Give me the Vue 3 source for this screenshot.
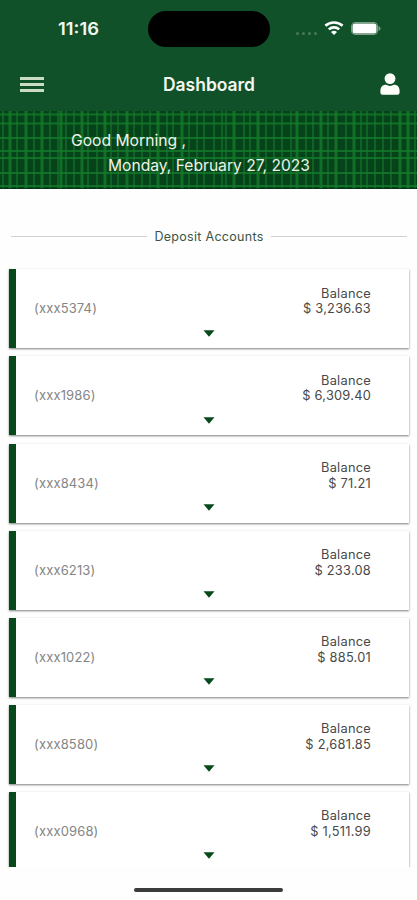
<template>
  <div class="screen">
    <header class="top">
      <div class="status-bar">
        <svg class="time" width="50" height="20" viewBox="0 0 50 20">
          <text x="0" y="16" textLength="41" lengthAdjust="spacingAndGlyphs">11:16</text>
        </svg>
        <div class="island"></div>
        <div class="status-icons">
          <div class="dots"><i v-for="n in 4" :key="n"></i></div>
          <svg class="wifi" width="20" height="15" viewBox="0 0 20 15">
            <path d="M1.4 4.8C6.3 .4 13.7 .4 18.6 4.8" />
            <path d="M4.8 8.4C7.8 5.7 12.2 5.7 15.2 8.4" />
            <path class="wifi-dot" d="M10 14L7 11Q10 8.6 13 11Z" />
          </svg>
          <svg class="battery" width="30" height="13" viewBox="0 0 30 13">
            <rect class="shell" x=".5" y=".5" width="26" height="12" rx="3.5" />
            <rect class="charge" x="1.5" y="1.5" width="24" height="10" rx="2.5" />
            <path class="tip" d="M27.5 4Q29.5 4.8 29.5 6.5T27.5 9Z" />
          </svg>
        </div>
      </div>

      <div class="nav-bar">
        <button class="menu-btn" aria-label="Menu"><i></i><i></i><i></i></button>
        <svg class="title" width="94" height="26" viewBox="0 0 94 26">
          <text x="0" y="19" textLength="92" lengthAdjust="spacingAndGlyphs">Dashboard</text>
        </svg>
        <button class="user-btn" aria-label="Profile">
          <svg width="20" height="22" viewBox="0 0 20 22">
            <circle cx="10" cy="5.6" r="5.4" />
            <path d="M.4 18C.4 13.8 2.6 11.8 6 11.8Q10 14 14 11.8C17.4 11.8 19.6 13.8 19.6 18V19.5Q19.6 21.8 17.4 21.8H2.6Q.4 21.8 .4 19.5Z" />
          </svg>
        </button>
      </div>
    </header>

    <section class="greeting">
      <svg class="plaid" width="417" height="78" viewBox="0 0 417 78">
        <rect width="417" height="78" fill="#07431a" />
        <rect v-for="x in thinColumns" :key="'t' + x" :x="x - 1" y="0" width="2" height="78" class="thread thin" />
        <rect v-for="x in wideColumns" :key="'w' + x" :x="x - 1.5" y="0" width="3" height="78" class="thread" />
        <rect v-for="y in rows" :key="'r' + y" x="0" :y="y - 1" width="417" height="2" class="thread" />
        <rect y="77" width="417" height="1" fill="#03280f" opacity=".6" />
      </svg>
      <svg class="greeting-text" width="417" height="78" viewBox="0 0 417 78">
        <text x="71" y="34.5" textLength="115" lengthAdjust="spacingAndGlyphs">Good Morning ,</text>
        <text x="108" y="60" textLength="202" lengthAdjust="spacingAndGlyphs">Monday, February 27, 2023</text>
      </svg>
    </section>

    <main>
      <div class="divider"><span>Deposit Accounts</span></div>

      <div class="account-list">
        <article v-for="account in accounts" :key="account.number" class="account">
          <span class="number">({{ account.number }})</span>
          <div class="balance">
            <span>Balance</span>
            <span class="amount">$ {{ account.balance }}</span>
          </div>
          <svg class="caret" width="12" height="7" viewBox="0 0 12 7"><path d="M.5 .3H11.5L6 6.7Z" /></svg>
        </article>
      </div>
    </main>

    <div class="home-indicator"></div>
  </div>
</template>

<script setup>
const accounts = [
  { number: 'xxx5374', balance: '3,236.63' },
  { number: 'xxx1986', balance: '6,309.40' },
  { number: 'xxx8434', balance: '71.21' },
  { number: 'xxx6213', balance: '233.08' },
  { number: 'xxx1022', balance: '885.01' },
  { number: 'xxx8580', balance: '2,681.85' },
  { number: 'xxx0968', balance: '1,511.99' }
]

// centre lines of the plaid threads
const thinColumns = [
  3, 17, 34, 50, 58, 66, 74, 88, 97, 111, 118, 134, 142, 150, 167, 173, 189, 197,
  204, 214, 222, 226, 244, 250, 266, 274, 282, 291, 306, 313, 328, 346, 361, 367,
  375, 383, 391, 415
]
const wideColumns = [10, 26, 42, 61, 82, 105, 127, 158, 182, 234, 258, 297, 321, 336, 354, 400, 408]
const rows = [3.5, 12.5, 27, 40, 47, 62, 75]
</script>

<style>
body {
  background: #fff;
}
</style>

<style scoped>
.screen {
  display: flex;
  flex-direction: column;
  width: 417px;
  height: 900px;
  overflow: hidden;
  background: #fefefe;
  font-family: Inter, 'Liberation Sans', sans-serif;
}

.top {
  height: 111px;
  background: #115129;
}

.status-bar {
  display: grid;
  grid-template-columns: 148px 122px 1fr;
  height: 58px;
  align-items: center;
}

.time {
  margin-left: 58px;
  fill: #f4f8f0;
  font-size: 17px;
  font-weight: 600;
}

.island {
  height: 36px;
  border-radius: 18px;
  background: #000;
}

.status-icons {
  display: flex;
  align-items: center;
  padding-left: 26px;
}

.dots {
  display: flex;
  gap: 3px;
  margin-top: 8px;
}

.dots i {
  width: 3px;
  height: 3px;
  border-radius: 50%;
  background: #477b56;
}

.wifi {
  margin: -2px 0 0 7px;
  fill: none;
  stroke: #fff;
  stroke-width: 2.6;
}

.wifi .wifi-dot {
  fill: #fff;
  stroke: none;
}

.battery {
  margin: -2px 0 0 7px;
}

.shell {
  fill: none;
  stroke: #7da087;
}

.charge {
  fill: #fff;
}

.tip {
  fill: #7da087;
}

.nav-bar {
  display: flex;
  justify-content: space-between;
  align-items: center;
  height: 53px;
  padding: 0 17px 0 20px;
}

button {
  padding: 0;
  border: 0;
  background: none;
}

.menu-btn {
  display: flex;
  flex-direction: column;
  gap: 3px;
  width: 24px;
}

.menu-btn i {
  height: 3px;
  background: #cbdcc4;
}

.title {
  margin-left: -5px;
  fill: #f4f8f0;
  font-size: 18px;
  font-weight: 600;
}

.user-btn svg {
  display: block;
  margin-top: -1px;
  fill: #fffffa;
}

.greeting {
  display: grid;
  height: 78px;
}

.greeting > svg {
  grid-area: 1 / 1;
}

.thread {
  fill: #147a2c;
  opacity: 0.8;
}

.thread.thin {
  opacity: 0.6;
}

.greeting-text {
  fill: #eef3e8;
  font-size: 16px;
}

main {
  height: 678px;
  overflow: hidden;
}

.divider {
  display: flex;
  align-items: center;
  gap: 7px;
  height: 16px;
  margin: 39.5px 10px 24.5px 11px;
  color: #3c5543;
  font-size: 12.5px;
  letter-spacing: 0.3px;
}

.divider::before,
.divider::after {
  content: '';
  flex: 1;
  height: 1px;
  background: #d0d2d0;
}

.account-list {
  display: flex;
  flex-direction: column;
  gap: 8.1px;
  padding: 0 8px 0 9px;
}

.account {
  display: grid;
  grid-template-columns: 187px 12px 1fr;
  flex: none;
  height: 79px;
  border-left: 7px solid #07491d;
  box-sizing: border-box;
  background: #fff;
  box-shadow: 0 1px 2px rgba(0, 0, 0, 0.5);
}

.account:first-child {
  margin-top: 0.4px;
}

.number {
  grid-area: 1 / 1;
  padding: 31px 0 0 18px;
  color: #858585;
  font-size: 13px;
  line-height: 16px;
  letter-spacing: 0.15px;
}

.caret {
  grid-area: 1 / 2;
  align-self: end;
  margin-bottom: 11.5px;
  fill: #064a1b;
}

.balance {
  grid-area: 1 / 3;
  display: flex;
  flex-direction: column;
  align-items: flex-end;
  padding: 16.5px 38px 0 0;
  color: #484848;
  font-size: 12.8px;
  line-height: 15.5px;
  letter-spacing: 0.25px;
}

.home-indicator {
  width: 149px;
  height: 4px;
  margin: 21px 0 0 134px;
  border-radius: 2px;
  background: #3a3c3b;
}
</style>
